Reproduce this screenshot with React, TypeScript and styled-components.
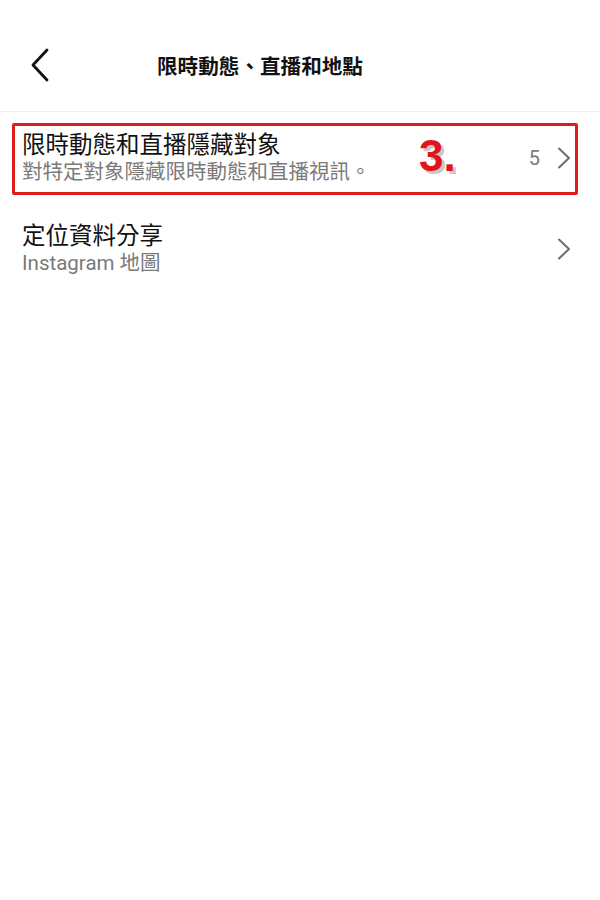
import React from "react";
import styled, { createGlobalStyle } from "styled-components";

const GlobalStyle = createGlobalStyle`
  body {
    margin: 0;
    background: #ffffff;
    font-family: Roboto, "Noto Sans CJK TC", sans-serif;
    color: #111111;
  }
`;

const Page = styled.div`
  width: 600px;
  min-height: 900px;
  background: #ffffff;
`;

const Header = styled.header`
  position: relative;
  height: 112px;
  display: flex;
  align-items: center;
  justify-content: center;
  border-bottom: 1px solid #f0f0f0;
  box-sizing: border-box;
  padding: 18px 80px 0 0;
`;

const BackButton = styled.button`
  position: absolute;
  left: 26px;
  top: 48px;
  width: 28px;
  height: 34px;
  padding: 0;
  border: none;
  background: none;
  display: flex;
  align-items: center;
  justify-content: center;
`;

const Title = styled.h1`
  margin: 0;
  font-family: "Noto Sans CJK TC", sans-serif;
  font-size: 20.6px;
  font-weight: 700;
  color: #111111;
`;

const Row = styled.div`
  position: relative;
  height: 91px;
  display: flex;
  align-items: center;
  padding: 0 29px 0 22px;
  box-sizing: border-box;
`;

const TextBlock = styled.div`
  flex: 1;
  display: flex;
  flex-direction: column;
`;

const RowTitle = styled.div`
  font-size: 23.5px;
  line-height: 28px;
  color: #111111;
`;

const RowSub = styled.div`
  font-size: 20.5px;
  line-height: 26px;
  color: #7a7a7a;
`;

const Trailing = styled.div`
  display: flex;
  align-items: center;
  gap: 17px;
  color: #7a7a7a;
  font-size: 20px;
`;

const Highlight = styled.div`
  position: absolute;
  left: 12px;
  top: 11px;
  right: 22px;
  bottom: 8px;
  border: 3px solid #dd1c1c;
  border-radius: 2px;
  pointer-events: none;
`;

const StepMark = styled.span`
  position: absolute;
  left: 419px;
  top: 21px;
  font-family: "Liberation Sans", sans-serif;
  font-weight: 700;
  font-size: 44px;
  line-height: 46px;
  color: #e0141a;
  text-shadow: 3px 3px 0 #c8c8c8;
`;

const Chevron = ({ dir }: { dir: "left" | "right" }) =>
  dir === "left" ? (
    <svg width="20" height="34" viewBox="0 0 20 34">
      <polyline
        points="17,2 3,17 17,32"
        fill="none"
        stroke="#111"
        strokeWidth="2.8"
        strokeLinecap="round"
        strokeLinejoin="round"
      />
    </svg>
  ) : (
    <svg width="14" height="22" viewBox="0 0 14 22">
      <polyline
        points="2,1.5 12,11 2,20.5"
        fill="none"
        stroke="#6e6e6e"
        strokeWidth="2"
        strokeLinecap="round"
        strokeLinejoin="round"
      />
    </svg>
  );

const App: React.FC = () => {
  return (
    <Page>
      <GlobalStyle />
      <Header>
        <BackButton>
          <Chevron dir="left" />
        </BackButton>
        <Title>限時動態、直播和地點</Title>
      </Header>

      <Row>
        <TextBlock>
          <RowTitle>限時動態和直播隱藏對象</RowTitle>
          <RowSub>對特定對象隱藏限時動態和直播視訊。</RowSub>
        </TextBlock>
        <Trailing>
          <span>5</span>
          <Chevron dir="right" />
        </Trailing>
        <Highlight />
        <StepMark>3.</StepMark>
      </Row>

      <Row>
        <TextBlock>
          <RowTitle>定位資料分享</RowTitle>
          <RowSub>Instagram 地圖</RowSub>
        </TextBlock>
        <Trailing>
          <Chevron dir="right" />
        </Trailing>
      </Row>
    </Page>
  );
};

export default App;
